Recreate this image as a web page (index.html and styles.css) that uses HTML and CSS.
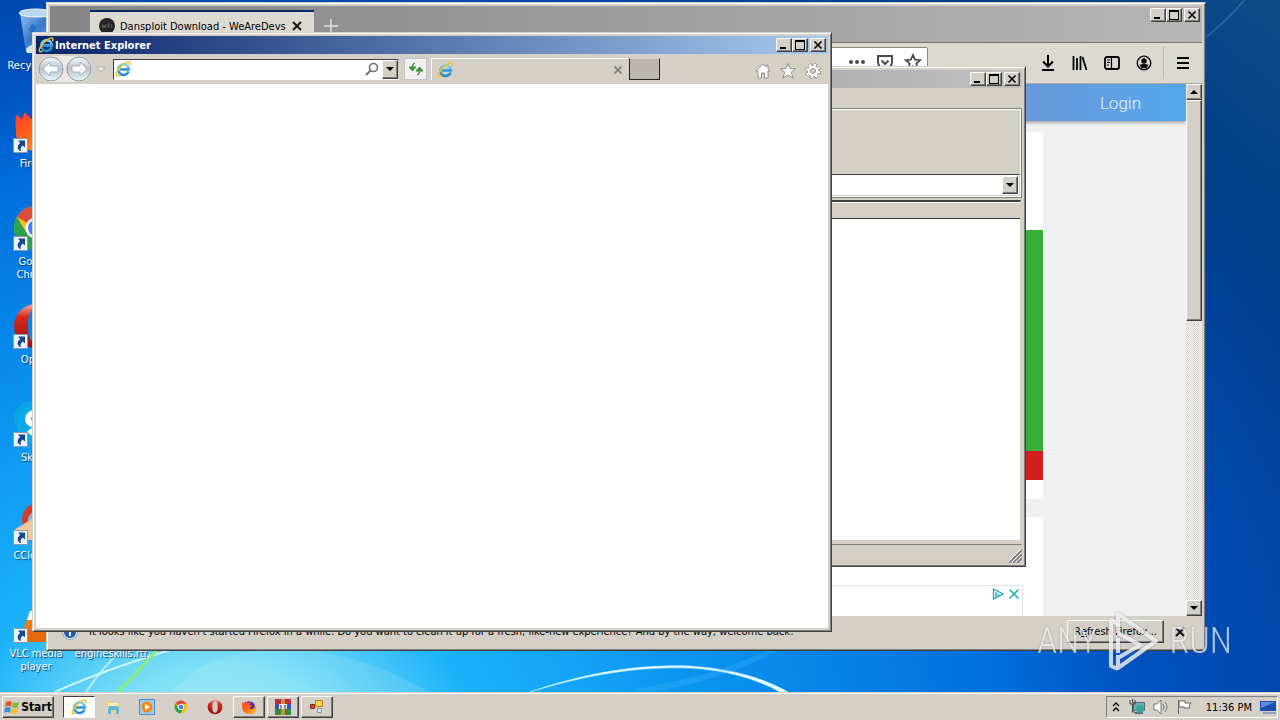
FILE: index.html
```html
<!DOCTYPE html>
<html lang="en">
<head>
<meta charset="utf-8">
<title>Desktop</title>
<link rel="stylesheet" href="styles.css">
</head>
<body>
<svg class="defs" aria-hidden="true">
  <defs>
    <linearGradient id="gIe" x1="0" y1="0" x2="0" y2="1"><stop offset="0" stop-color="#7fd4f8"/><stop offset="1" stop-color="#1b86d0"/></linearGradient>
    <linearGradient id="gNav" x1="0" y1="0" x2="0" y2="1"><stop offset="0" stop-color="#f4f6f8"/><stop offset=".5" stop-color="#b9c4cc"/><stop offset="1" stop-color="#e6fafa"/></linearGradient>
    <linearGradient id="gBin" x1="0" y1="0" x2="1" y2="1"><stop offset="0" stop-color="#a9cdf0"/><stop offset=".5" stop-color="#3f7fd0"/><stop offset="1" stop-color="#8fb8e4"/></linearGradient>
    <linearGradient id="gFox" x1="0" y1="0" x2="1" y2="1"><stop offset="0" stop-color="#ff3b30"/><stop offset=".5" stop-color="#ff6a13"/><stop offset="1" stop-color="#ffca28"/></linearGradient>
    <linearGradient id="gOpera" x1="0" y1="0" x2="0" y2="1"><stop offset="0" stop-color="#f4a8a0"/><stop offset=".3" stop-color="#d42a20"/><stop offset="1" stop-color="#9c0d0d"/></linearGradient>
  </defs>
  <symbol id="ie" viewBox="0 0 16 16">
    <path d="M13.6 10.6A5.4 5.4 0 1 1 14 8.4H5.2" fill="none" stroke="url(#gIe)" stroke-width="2.6"/>
    <path d="M5.2 8.4H14" stroke="#2f98dc" stroke-width="1.8"/>
    <path d="M14.6 4.2C15.6 1.6 14.4.4 11.8 1.4 7.8 2.9 2.4 8.4 1.4 12.2.8 14.6 2 15.4 4.6 14" fill="none" stroke="#f2c21a" stroke-width="1.5"/>
  </symbol>
  <symbol id="min" viewBox="0 0 12 10"><path d="M2 7h6v2H2z"/></symbol>
  <symbol id="max" viewBox="0 0 12 10"><path d="M1 0h10v10H1zM2 2v7h8V2z" fill-rule="evenodd"/></symbol>
  <symbol id="close" viewBox="0 0 12 10"><path d="M2.500 1.500l7 7M9.500 1.500l-7 7" stroke="#000" stroke-width="1.600"/></symbol>
  <symbol id="down" viewBox="0 0 8 4"><path d="M0 0h8L4 4z"/></symbol>
  <symbol id="shortcut" viewBox="0 0 15 15">
    <path d="M.5.5h14v14H.5z" fill="#eef3f8" stroke="#8b98a8"/>
    <path d="M5 2.500h7v7L9.800 7.600C7.400 9.400 7.200 11 8 13 4.600 12.400 3 8 7.200 4.900z" fill="#16468e"/>
  </symbol>
  <symbol id="chrome" viewBox="0 0 48 48">
    <circle cx="24" cy="24" r="22" fill="#fbc116"/>
    <path d="M24 24L5 13A22 22 0 0 1 43 13H24z" fill="#de4a3c"/>
    <path d="M5 13A22 22 0 0 0 22 46L33 28 14 28z" fill="#2da150"/>
    <circle cx="24" cy="24" r="10.500" fill="#fff"/><circle cx="24" cy="24" r="8" fill="#3f83ee"/>
  </symbol>
  <symbol id="firefox" viewBox="0 0 48 48">
    <circle cx="25" cy="25" r="18" fill="#4a35b8"/>
    <path d="M5 8l5 5 3-7 6 7c5-3 9-3 12-2-4 1-5 4-5 6l6 3c0 4-5 5-8 5 2 7 13 7 16 0 1-4 0-8-2-11 7 5 9 12 7 19-3 10-13 14-23 12C9 43 3 34 4 24 3 18 3 13 5 8z" fill="url(#gFox)"/>
  </symbol>
  <symbol id="opera" viewBox="0 0 48 48"><path d="M24 2a22 22 0 1 0 .1 0zM24 7c7 0 8 9 8 17s-1 17-8 17-8-9-8-17 1-17 8-17z" fill="url(#gOpera)" fill-rule="evenodd"/></symbol>
</svg>

<main class="desktop">
  <svg class="wallpaper" viewBox="0 0 1280 70" aria-hidden="true">
    <path d="M200 45C250 22 310 18 390 50L430 70H170z" fill="#fff" opacity=".1"/>
    <path d="M55 70Q105 47 190 22" fill="none" stroke="#e8ffff" stroke-width="2" opacity=".8"/>
    <path d="M86 70Q102 46 125 24" fill="none" stroke="#d5fbff" stroke-width="2" opacity=".7"/>
    <path d="M118 70Q138 50 162 22" fill="none" stroke="#92ee62" stroke-width="2.500"/>
    <path d="M530 70C600 46 650 43 690 44 735 47 765 57 788 70L780 70C755 56 725 48 690 46 645 45 600 49 530 70z" fill="#eaffff" stroke="#bff0ff" stroke-width=".6"/>
    <path d="M635 70Q720 57 775 27" fill="none" stroke="#48b8ff" stroke-width="6" opacity=".25"/>
  </svg>
  <svg class="ray" viewBox="0 0 80 50" aria-hidden="true"><path d="M0 42Q24 24 48-4" fill="none" stroke="#3974b4" stroke-width="2" opacity=".6"/></svg>

  <div class="icons">
    <div class="icon"><svg viewBox="0 0 48 48"><path d="M8 5l32-2-6 42H14z" fill="url(#gBin)" opacity=".9"/><ellipse cx="24" cy="5" rx="17" ry="4" fill="#b9d7f2" stroke="#edf6ff"/><path d="M14 41q8-9 17 0v4H15z" fill="#dfe6dd"/><path d="M20 16l5 3-4 6-5-3z" fill="#2e6ec2"/></svg><span>Recycle Bin</span></div>
    <div class="icon"><svg><use href="#firefox"/></svg><svg class="badge"><use href="#shortcut"/></svg><span>Firefox</span></div>
    <div class="icon"><svg><use href="#chrome"/></svg><svg class="badge"><use href="#shortcut"/></svg><span>Google<br>Chrome</span></div>
    <div class="icon"><svg><use href="#opera"/></svg><svg class="badge"><use href="#shortcut"/></svg><span>Opera</span></div>
    <div class="icon"><svg viewBox="0 0 48 48"><circle cx="17" cy="17" r="15" fill="#08a5e6"/><circle cx="25" cy="25" r="20" fill="#0baae8"/><path d="M33 16c-5-6-17-4-17 3 0 8 16 5 16 11 0 5-10 5-15 0" fill="none" stroke="#fff" stroke-width="6"/></svg><svg class="badge"><use href="#shortcut"/></svg><span>Skype</span></div>
    <div class="icon"><svg viewBox="0 0 48 48"><path d="M10 22C10 8 25 0 42 4v30H12z" fill="#d83a2c"/><path d="M16 20c2-7 12-9 20-6v20H16z" fill="#87b6cc"/><path d="M2 32l18-11 14 5v16H14z" fill="#efc79c"/></svg><svg class="badge"><use href="#shortcut"/></svg><span>CCleaner</span></div>
    <div class="icon"><svg viewBox="0 0 48 48"><path d="M24 2l14 34H10z" fill="#f07a12"/><path d="M18 15h12l3 9H15z" fill="#fff"/><path d="M6 34h36l4 12H2z" fill="#e8690c"/></svg><svg class="badge"><use href="#shortcut"/></svg><span>VLC media player</span></div>
    <div class="icon"><svg viewBox="0 0 48 48"><path d="M10 2h24l6 6v38H10z" fill="#fff"/></svg><span>engineskills.rtf</span></div>
  </div>

  <section class="window firefox" aria-label="Firefox">
    <header class="ff-tabs">
      <div class="ff-tab">
        <svg class="i16" viewBox="0 0 16 16"><circle cx="8" cy="8" r="8" fill="#252525"/><path d="M3 6l1 4 1-3 1 3 1-4M9 10V6h2M9 8h2M12 6q2 2 0 4" fill="none" stroke="#5a5a5a"/></svg>
        <span>Dansploit Download - WeAreDevs</span>
        <button class="flat" aria-label="Close tab"><svg class="i10" viewBox="0 0 10 10"><path d="M1 1l8 8M9 1L1 9" stroke="#111" stroke-width="1.800"/></svg></button>
      </div>
      <button class="flat plus" aria-label="New tab"><svg class="i14" viewBox="0 0 14 14"><path d="M7 0v14M0 7h14" stroke="#ddd" stroke-width="1.500"/></svg></button>
      <div class="controls">
        <button aria-label="Minimize"><svg><use href="#min"/></svg></button><button aria-label="Maximize"><svg><use href="#max"/></svg></button><button class="x" aria-label="Close"><svg><use href="#close"/></svg></button>
      </div>
    </header>
    <div class="ff-toolbar">
      <div class="ff-url">
        <input type="text" aria-label="Address">
        <svg class="i18" viewBox="0 0 18 18"><g fill="#4b4b4b"><circle cx="3" cy="9" r="2"/><circle cx="9" cy="9" r="2"/><circle cx="15" cy="9" r="2"/></g></svg>
        <svg class="i18" viewBox="0 0 18 18"><path d="M2 3h14v6a7 7 0 0 1-14 0zM5.500 7.500L9 11l3.500-3.500" fill="none" stroke="#4b4b4b" stroke-width="2"/></svg>
        <svg class="i18" viewBox="0 0 18 18"><path d="M9 2l2.100 4.600 5 .6-3.700 3.400 1 5L9 13.200 4.600 15.600l1-5L1.900 7.200l5-.6z" fill="none" stroke="#4b4b4b" stroke-width="1.800"/></svg>
      </div>
      <div class="ff-tools">
        <button class="flat" aria-label="Downloads"><svg class="i16" viewBox="0 0 16 16"><path d="M8 0v11M3 6.500l5 5 5-5M2 15h12" fill="none" stroke="#000" stroke-width="2"/></svg></button>
        <button class="flat" aria-label="Library"><svg class="i16" viewBox="0 0 16 16"><path d="M1.500 1v14M5 3v12M8.500 1v14M10.500 2l4 13" stroke="#000" stroke-width="1.800"/></svg></button>
        <button class="flat" aria-label="Sidebar"><svg class="i16" viewBox="0 0 16 16"><rect x="1" y="2" width="14" height="12" rx="2" fill="none" stroke="#000" stroke-width="1.800"/><path d="M7.500 2v12M3 5h3M3 7.500h3M3 10h2" stroke="#000" stroke-width="1.200"/></svg></button>
        <button class="flat" aria-label="Account"><svg class="i16" viewBox="0 0 16 16"><circle cx="8" cy="8" r="6.800" fill="none" stroke="#000" stroke-width="1.300"/><circle cx="8" cy="6" r="2.700"/><path d="M3.500 10q4.500-2 9 0-1.500 3.500-4.500 3.500T3.500 10z"/></svg></button>
        <button class="flat menu" aria-label="Menu"><svg class="i14" viewBox="0 0 14 14"><path d="M1 2h12M1 7h12M1 12h12" stroke="#000" stroke-width="2"/></svg></button>
      </div>
    </div>
    <div class="ff-content">
      <div class="site">
        <nav class="site-nav"><a href="#login">Login</a></nav>
        <div class="site-body">
          <div class="card"><div class="green"></div><div class="red"></div></div>
          <div class="card second">
            <div class="ad">
              <svg viewBox="0 0 12 12"><path d="M1.500 1l9.500 5-9.500 5zM4 4v5M6 5.500v2" fill="none" stroke="#19a9b5" stroke-width="1.300"/></svg>
              <svg viewBox="0 0 12 12"><path d="M1.500 1.500l9 9M10.500 1.500l-9 9" stroke="#19a9b5" stroke-width="1.500"/></svg>
            </div>
          </div>
        </div>
      </div>
      <div class="scrollbar">
        <button class="raised" aria-label="Scroll up"><svg class="arrow up"><use href="#down"/></svg></button>
        <div class="thumb raised"></div>
        <div class="track"></div>
        <button class="raised" aria-label="Scroll down"><svg class="arrow"><use href="#down"/></svg></button>
      </div>
    </div>
    <footer class="ff-note">
      <svg class="i16" viewBox="0 0 16 16"><circle cx="8" cy="8" r="7.500" fill="#dce8fa" stroke="#8aa"/><circle cx="8" cy="8" r="6" fill="#2858b8"/><path d="M7 3h2v2H7zM7 7h2v5H7z" fill="#fff"/></svg>
      <p>It looks like you haven't started Firefox in a while. Do you want to clean it up for a fresh, like-new experience? And by the way, welcome back!</p>
      <button class="raised refresh">R<u>e</u>fresh Firefox...</button>
      <button class="flat" aria-label="Dismiss"><svg class="i10" viewBox="0 0 10 10"><path d="M1 1l8 8M9 1L1 9" stroke="#111" stroke-width="2"/></svg></button>
    </footer>
  </section>

  <section class="window archive" aria-label="Archive">
    <header class="titlebar inactive">
      <div class="controls">
        <button aria-label="Minimize"><svg><use href="#min"/></svg></button><button aria-label="Maximize"><svg><use href="#max"/></svg></button><button class="x" aria-label="Close"><svg><use href="#close"/></svg></button>
      </div>
    </header>
    <div class="menubar"></div>
    <div class="rebar">
      <div class="combo"><select aria-label="Folder"><option></option></select><span class="raised drop"><svg class="arrow"><use href="#down"/></svg></span></div>
    </div>
    <div class="list"><div class="list-head"></div></div>
    <footer class="status"><svg class="i14" viewBox="0 0 14 14"><path d="M1 14L14 1M5 14l9-9M9 14l5-5" stroke="#808080" stroke-width="1.800"/><path d="M0 13L13 0M4 13l9-9M8 13l5-5" stroke="#fff"/></svg></footer>
  </section>

  <section class="window explorer" aria-label="Internet Explorer">
    <header class="titlebar">
      <svg class="i16"><use href="#ie"/></svg>
      <h1>Internet Explorer</h1>
      <div class="controls">
        <button aria-label="Minimize"><svg><use href="#min"/></svg></button><button aria-label="Maximize"><svg><use href="#max"/></svg></button><button class="x" aria-label="Close"><svg><use href="#close"/></svg></button>
      </div>
    </header>
    <div class="ie-bar">
      <div class="nav">
        <button class="flat" aria-label="Back"><svg viewBox="0 0 26 26"><circle cx="13" cy="13" r="12" fill="url(#gNav)" stroke="#8d979e"/><path d="M12 6l-7 7 7 7v-4h8v-6h-8z" fill="#fff" stroke="#a5b0b8"/></svg></button>
        <button class="flat" aria-label="Forward"><svg viewBox="0 0 26 26"><circle cx="13" cy="13" r="12" fill="url(#gNav)" stroke="#8d979e"/><path d="M14 6l7 7-7 7v-4H6v-6h8z" fill="#fff" stroke="#a5b0b8"/></svg></button>
      </div>
      <svg class="i10 recent" viewBox="0 0 10 10"><path d="M1 3h8L5 8z" fill="#eee" stroke="#b5afa8"/></svg>
      <div class="address">
        <svg class="i16"><use href="#ie"/></svg>
        <input type="text" aria-label="Address">
        <svg class="i14" viewBox="0 0 14 14"><circle cx="8.500" cy="5.500" r="4" fill="none" stroke="#777" stroke-width="1.700"/><path d="M5.500 8.500L1 13" stroke="#777" stroke-width="2.200"/></svg>
        <button class="raised drop" aria-label="Show addresses"><svg class="arrow"><use href="#down"/></svg></button>
      </div>
      <button class="reload" aria-label="Refresh"><svg class="i16" viewBox="0 0 16 16"><path d="M7 2Q4 2.500 4.500 6M1 6h7L4.500 10z" fill="#37913a" stroke="#37913a"/><path d="M9 14q3-.5 2.500-4M8 10h7l-3.500-4z" fill="#37913a" stroke="#37913a"/></svg></button>
      <div class="ie-tab"><svg class="i16"><use href="#ie"/></svg><button class="flat" aria-label="Close tab"><svg class="i10" viewBox="0 0 10 10"><path d="M1.500 1.500l7 7M8.500 1.500l-7 7" stroke="#8b8883" stroke-width="2"/></svg></button></div>
      <button class="newtab" aria-label="New tab"></button>
      <div class="ie-tools">
        <button class="flat" aria-label="Home"><svg class="i16" viewBox="0 0 16 16"><path d="M8 .8L.8 8H3v7h3.500v-5h3v5H13V8h2.200L13 5.800V2h-2v1.800z" fill="#fff" stroke="#918d88"/></svg></button>
        <button class="flat" aria-label="Favorites"><svg class="i16" viewBox="0 0 16 16"><path d="M8 .6l2.200 5h5.300l-4.200 3.500 1.700 6L8 11.900l-5 3.200 1.700-6L.5 5.600h5.300z" fill="#fff" stroke="#918d88"/></svg></button>
        <button class="flat" aria-label="Tools"><svg class="i16" viewBox="0 0 16 16"><circle cx="8" cy="8" r="6.500" fill="none" stroke="#918d88" stroke-width="3" stroke-dasharray="3 2.100"/><circle cx="8" cy="8" r="5.800" fill="#fff" stroke="#918d88"/><circle cx="8" cy="8" r="6.300" fill="none" stroke="#fff" stroke-width="2" stroke-dasharray="2.200 2.750"/><circle cx="8" cy="8" r="2.500" fill="#d4d0c8" stroke="#918d88"/></svg></button>
      </div>
    </div>
    <div class="ie-page"></div>
  </section>

  <div class="watermark">
    <span>ANY</span>
    <svg viewBox="0 0 54 62"><path d="M12 23V4l38 27-38 27V45M12 14L5 10v46l7 3M12 23l22 12-22 13M12 28v15" fill="none" stroke="#fff" stroke-width="4" stroke-linejoin="round" opacity=".75"/></svg>
    <span>RUN</span>
  </div>
</main>

<footer class="taskbar">
  <button class="raised start"><svg class="i16" viewBox="0 0 16 16"><path d="M2 3q3-2 6 0L7 8Q4 6 1 8z" fill="#e8592a"/><path d="M9 3q3 2 6 0l-1 5q-3 2-6 0z" fill="#7db93c"/><path d="M1 9q3-2 6 0l-1 5q-3-2-6 0z" fill="#3f8fd8"/><path d="M8 9q3 2 6 0l-1 5q-3 2-6 0z" fill="#f5c02c"/></svg>Start</button>
  <div class="tasks">
    <button class="task pressed" aria-label="Internet Explorer"><svg><use href="#ie"/></svg></button>
    <button class="task" aria-label="File Explorer"><svg viewBox="0 0 16 16"><path d="M1 2h5l1 2h7v10H2z" fill="#f0d372"/><path d="M3 4h10v5H3z" fill="#f8eab0"/><path d="M3 15V9q0-2 2-2h7q2 0 2 2v6h-3v-4H6v4z" fill="#67b3dc"/></svg></button>
    <button class="task" aria-label="Media Player"><svg viewBox="0 0 16 16"><path d="M.5.5h15v15H.5z" fill="#9ccaf0" stroke="#4e8fc8"/><circle cx="8" cy="8" r="5.500" fill="#f18a18"/><path d="M6 5l5 3-5 3z" fill="#fff"/></svg></button>
    <button class="task" aria-label="Chrome"><svg class="small"><use href="#chrome"/></svg></button>
    <button class="task" aria-label="Opera"><svg><use href="#opera"/></svg></button>
    <button class="task raised" aria-label="Firefox"><svg><use href="#firefox"/></svg></button>
    <button class="task raised" aria-label="WinRAR"><svg viewBox="0 0 16 16"><path d="M0 0h16v5H0z" fill="#b92b48"/><path d="M0 5h16v5H0z" fill="#3e52b4"/><path d="M0 10h16v6H0z" fill="#2e8a3c"/><path d="M6 0h4v16H6z" fill="#c89030"/><path d="M4 5h8v5H4z" fill="#eee"/><path d="M6 6v4M10 6v4" stroke="#333"/></svg></button>
    <button class="task raised" aria-label="Application"><svg viewBox="0 0 16 16"><path d="M6.500 1.500h7v6h-7z" fill="#f9d34a" stroke="#b08a18"/><path d="M1.500 5.500h4v4h-4z" fill="#d4452c" stroke="#8f2314"/><path d="M8.500 9.500h4v4h-4z" fill="#dce9f8" stroke="#7d93b4"/></svg></button>
  </div>
  <div class="tray">
    <svg class="i10" viewBox="0 0 10 10"><path d="M2 4l3-3 3 3M2 9l3-3 3 3" fill="none" stroke="#000" stroke-width="1.300"/></svg>
    <svg class="i16" viewBox="0 0 16 16"><path d="M4.500 3.500h11v8h-11z" fill="#5fb8b0" stroke="#56706e"/><path d="M6 14h8" stroke="#567" stroke-width="2"/><circle cx="11" cy="10" r="4" fill="#3fa79c"/><path d="M1 1v4h5V1M3.500 0v4M3.500 5v8H6" fill="none" stroke="#444"/></svg>
    <svg class="i16" viewBox="0 0 16 16"><path d="M1 5h3l4-4v14l-4-4H1z" fill="#fff" stroke="#777"/><path d="M10 5q2 3 0 6M12 3q4 5 0 10" fill="none" stroke="#777"/></svg>
    <svg class="i16" viewBox="0 0 16 16"><path d="M1.500 1v14M2 2h6v2h6l-2 3 1 2H7V8H2z" fill="#fff" stroke="#666"/></svg>
    <time>11:36 PM</time>
    <svg class="i16" viewBox="0 0 16 16"><path d="M0 2h16v10H0z" fill="#1f4fae"/><path d="M1 3h14L1 9z" fill="#5c8de0"/><path d="M3 13h13v2H3z" fill="#8fa3bd"/></svg>
  </div>
</footer>
</body>
</html>
```
FILE: styles.css
```css
* { box-sizing: border-box; }

body {
  margin: 0;
  height: 100vh;
  display: flex;
  flex-direction: column;
  overflow: hidden;
  color: #000;
  font: 11px/13px "DejaVu Sans Condensed", "DejaVu Sans", sans-serif;
}

button, input, select {
  margin: 0;
  padding: 0;
  border: 0;
  border-radius: 0;
  background: none;
  color: inherit;
  font: inherit;
}

button { display: flex; align-items: center; justify-content: center; }
svg { display: block; flex: none; }
.defs { position: absolute; width: 0; height: 0; }
.i10 { width: 10px; height: 10px; }
.i14 { width: 14px; height: 14px; }
.i16 { width: 16px; height: 16px; }
.i18 { width: 18px; height: 18px; }

.raised {
  background: #d4d0c8;
  border: 1px solid;
  border-color: #fff #404040 #404040 #fff;
  box-shadow: inset -1px -1px #808080;
}

.arrow { width: 8px; height: 4px; }
.arrow.up { transform: rotate(180deg); }

/* Desktop */
.desktop {
  position: relative;
  flex: 1;
  min-height: 0;
  overflow: hidden;
  background: radial-gradient(ellipse 1350px 1000px at 17% 108%, #9be8f4 0, #7fe0f5 8%, #1cb2fa 19%, #0a92ee 37%, #006fdc 58%, #0052c0 68%, #0048ac 78%, #003f88 92%, #0c4888 106%);
}

.wallpaper { position: absolute; left: 0; bottom: 0; width: 100%; height: 70px; }
.ray { position: absolute; right: 0; top: 0; width: 80px; height: 50px; }

.icons {
  display: grid;
  grid-template-rows: repeat(7, 98px);
  grid-auto-columns: 75px;
  grid-auto-flow: column;
  justify-content: start;
  padding-top: 8px;
}

.icon:nth-child(8) { grid-row: 7; }

.icon {
  position: relative;
  display: flex;
  flex-direction: column;
  align-items: center;
  gap: 3px;
  padding: 0 8px 0 5px;
  color: #fff;
  text-align: center;
  text-shadow: 1px 1px 1px #0a3a70;
}

.icon > svg { width: 48px; height: 48px; }
.icon > .badge { position: absolute; left: 13px; top: 32px; width: 15px; height: 15px; }
.icon span { margin: 0 -8px; }

/* Window frame */
.window {
  position: absolute;
  display: flex;
  flex-direction: column;
  padding: 3px;
  background: #d4d0c8;
  border: 1px solid;
  border-color: #d4d0c8 #404040 #404040 #d4d0c8;
  box-shadow: inset 1px 1px #fff, inset -1px -1px #808080;
}

.titlebar {
  display: flex;
  align-items: center;
  height: 18px;
  padding: 0 2px;
  gap: 1px;
  color: #fff;
  background: linear-gradient(to right, #0a246a, #a6caf0);
}

.titlebar.inactive { background: linear-gradient(to right, #808080, #c0c0c0); }
.titlebar h1 { margin: 0; font-size: 11px; line-height: 13px; font-weight: bold; }

.controls { display: flex; margin-left: auto; }

.controls button {
  width: 16px;
  height: 14px;
  background: #d4d0c8;
  border: 1px solid;
  border-color: #fff #404040 #404040 #fff;
  box-shadow: inset -1px -1px #808080;
}

.controls .x { margin-left: 2px; }
.controls svg { width: 12px; height: 10px; }

/* Firefox */
.firefox { left: 46px; top: 2px; right: 74px; bottom: 41px; }

.ff-tabs {
  display: flex;
  height: 37px;
  padding: 2px 2px 0 40px;
  background: linear-gradient(to right, #858585, #b6b6b6);
  border-bottom: 1px solid #77746e;
}

.ff-tab {
  display: flex;
  align-items: center;
  gap: 5px;
  width: 224px;
  height: 34px;
  margin-top: 2px;
  padding: 0 12px 4px 9px;
  background: #dcd9d2;
  border-top: 2px solid #0a246a;
}

.ff-tab span { flex: 1; white-space: nowrap; }
.plus { align-self: flex-start; margin: 11px 0 0 10px; }

.ff-toolbar {
  display: flex;
  height: 41px;
  padding: 4px 0 5px 130px;
  background: #dcd9d2;
  border-bottom: 1px solid #aaa69e;
}

.ff-url {
  display: flex;
  align-items: center;
  flex: 1;
  gap: 10px;
  height: 30px;
  margin-right: 112px;
  padding: 0 5px;
  background: #fff;
  border: 1px solid #8b8882;
  border-radius: 2px;
}

.ff-url input { flex: 1; min-width: 0; }
.ff-tools { display: flex; gap: 16px; padding-right: 12px; }

.ff-tools .menu {
  margin: -1px 0 -1px -5px;
  padding-left: 12px;
  border-left: 1px solid #c0bcb5;
}

.ff-content { display: flex; flex: 1; min-height: 0; }
.site { flex: 1; display: flex; flex-direction: column; min-width: 0; overflow: hidden; background: #f0f0f0; }

.site-nav {
  display: flex;
  align-items: center;
  justify-content: flex-end;
  flex: none;
  height: 37px;
  padding-right: 45px;
  background: linear-gradient(to right, #7c7cc0, #6a98da 85%, #54a8ec);
  box-shadow: 0 1px 4px #888;
}

.site-nav a {
  color: #eaf4ff;
  font: 300 17px/20px Roboto, "Open Sans", sans-serif;
  text-decoration: none;
}

.site-body { flex: 1; min-height: 0; display: flex; flex-direction: column; gap: 18px; padding: 11px 143px 0; }
.card { flex: none; padding: 98px 0 19px; background: #fff; }
.green { height: 221px; background: #37ae37; }
.red { height: 29px; background: #d41e22; }
.card.second { flex: 1; padding: 68px 20px 0; display: flex; }

.ad {
  display: flex;
  justify-content: flex-end;
  flex: 1;
  gap: 4px;
  padding: 2px 2px 0;
  border: 1px solid #e4e0e8;
  border-bottom: 0;
}

.ad svg { width: 12px; height: 12px; }

.scrollbar { display: flex; flex-direction: column; width: 16px; }
.scrollbar button { height: 16px; flex: none; }
.thumb { height: 221px; }

.track {
  flex: 1;
  background: repeating-conic-gradient(#d4d0c8 0 25%, #fff 0 50%) 0 0 / 2px 2px;
}

.ff-note {
  display: flex;
  align-items: center;
  height: 31px;
  padding: 0 17px 0 12px;
  gap: 11px;
}

.ff-note p { flex: 1; margin: 0; white-space: nowrap; }
.refresh { height: 23px; padding: 0 6px; }

/* Archive window */
.archive { left: 229px; top: 66px; width: 797px; height: 501px; }
.menubar { height: 20px; }

.rebar {
  display: flex;
  align-items: flex-end;
  height: 90px;
  padding: 0 1px 1px;
  border: 1px solid #808080;
  box-shadow: inset 1px 1px #fff, inset -1px -1px #fff;
}

.combo {
  display: flex;
  flex: 1;
  height: 22px;
  padding: 1px;
  background: #fff;
  border: 1px solid;
  border-color: #404040 #d4d0c8 #d4d0c8 #404040;
}

.combo select { flex: 1; appearance: none; }
.drop { display: flex; align-items: center; justify-content: center; width: 16px; }

.list {
  flex: 1;
  margin: 2px 1px 3px 0;
  background: #fff;
  border: 1px solid #d4d0c8;
  border-top: 2px solid #404040;
}

.list-head { height: 17px; background: #d4d0c8; border-top: 1px solid #fff; border-bottom: 1px solid #404040; }
.status { display: flex; justify-content: flex-end; align-items: flex-end; height: 19px; border-top: 1px solid #808080; }

/* Internet Explorer */
.explorer { left: 32px; top: 32px; width: 800px; height: 600px; }
.ie-bar { display: flex; align-items: center; height: 30px; padding: 0 7px 0 2px; }
.nav { display: flex; gap: 2px; background: #ebe9e6; border-radius: 14px; }
.nav svg { width: 26px; height: 26px; }
.recent { margin: 0 7px 0 4px; }

.address {
  display: flex;
  align-items: center;
  gap: 3px;
  width: 286px;
  height: 21px;
  padding: 0 0 0 1px;
  background: #fff;
  border: 1px solid;
  border-color: #404040 #d4d0c8 #fff #404040;
}

.address input { flex: 1; min-width: 0; }
.address .drop { height: 19px; }

.reload {
  width: 23px;
  height: 22px;
  margin: 0 4px 0 5px;
  background: #f0f1ee;
  border: 1px solid #c6c3c9;
}

.ie-tab {
  display: flex;
  align-items: center;
  justify-content: space-between;
  width: 197px;
  height: 22px;
  padding: 0 5px;
  border: 1px solid #fff;
  border-width: 1px 0 0 1px;
}

.newtab {
  width: 31px;
  height: 22px;
  margin-left: 1px;
  background: #bbb6b0;
  border: 1px solid #222;
  border-top-color: #d4d0c8;
}

.ie-tools { display: flex; gap: 9px; margin: 4px 0 0 auto; }
.ie-page { flex: 1; background: #fff; }

/* Recording watermark */
.watermark {
  position: absolute;
  right: 48px;
  bottom: 20px;
  display: flex;
  align-items: center;
  gap: 9px;
  color: rgba(255, 255, 255, .65);
  font: 300 36px/44px "Roboto Condensed", "Open Sans Condensed", "Liberation Sans Narrow", Roboto, sans-serif;
  filter: drop-shadow(0 0 1px rgba(90, 100, 120, .6));
  pointer-events: none;
}

.watermark svg { width: 54px; height: 62px; }

/* Taskbar */
.taskbar {
  display: flex;
  align-items: center;
  flex: none;
  height: 28px;
  padding: 1px 2px 0;
  background: #d4d0c8;
  border-top: 1px solid #d4d0c8;
  box-shadow: inset 0 1px #fff;
}

.start { gap: 1px; width: 52px; height: 22px; font-size: 12px; font-weight: bold; }
.tasks { display: flex; gap: 2px; margin-left: 9px; }
.task { width: 32px; height: 22px; }
.task svg { width: 16px; height: 16px; }
.task .small { width: 14px; height: 14px; }
.task.pressed { background: #fff; border: 1px solid; border-color: #404040 #fff #fff #404040; }

.tray {
  display: flex;
  align-items: center;
  gap: 8px;
  height: 22px;
  margin-left: auto;
  padding: 0 1px 0 4px;
  border: 1px solid;
  border-color: #808080 #fff #fff #808080;
}

.tray time { margin-left: 5px; }
```
